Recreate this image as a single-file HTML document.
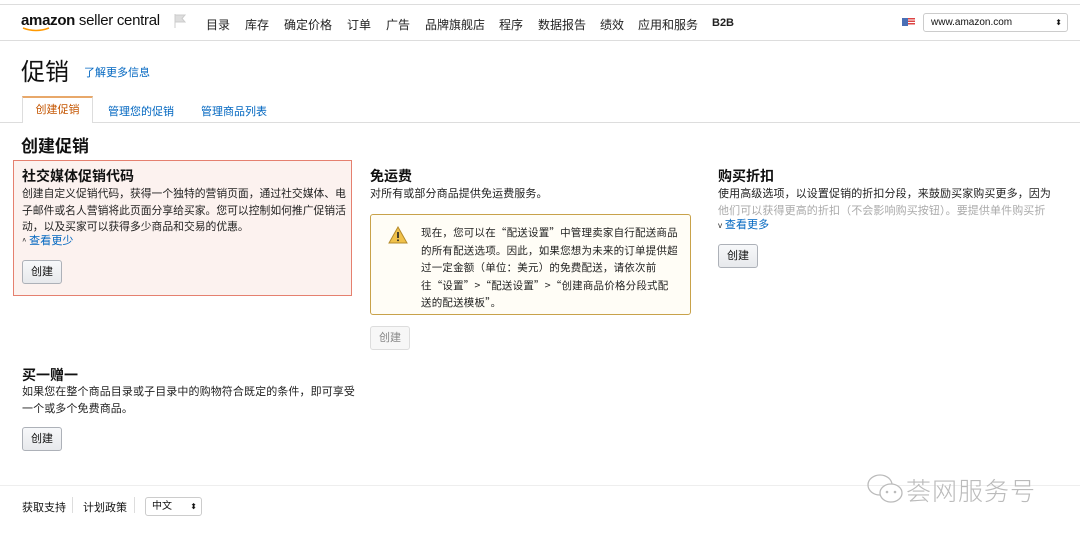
<!DOCTYPE html>
<html><head><meta charset="utf-8"><style>
*{margin:0;padding:0;box-sizing:border-box}
body{width:1080px;height:536px;background:#fff;font-family:"Liberation Sans","Noto Sans CJK SC",sans-serif;color:#111;position:relative;overflow:hidden;font-size:11px}
.abs{position:absolute}
.nav span{position:absolute;top:16px;font-size:12px;color:#222}
.btn{position:absolute;height:24px;padding:0 8px;border:1px solid #adb1b8;border-radius:3px;background:linear-gradient(#f7f8fa,#e7e9ec);font-size:11px;line-height:22px;color:#111}
.h{position:absolute;font-size:14px;font-weight:bold}
.p{position:absolute;font-size:11px;line-height:16.5px;color:#222;font-family:"Noto Sans CJK SC",sans-serif;letter-spacing:0.1px}
a{color:#0066c0;text-decoration:none}
</style></head><body>
<div class="abs" style="left:0;top:4px;width:1080px;height:1px;background:#ddd"></div>
<div class="abs" style="left:0;top:40px;width:1080px;height:1px;background:#ddd"></div>
<div class="abs" style="left:21px;top:12px;font-size:15px;letter-spacing:-0.3px"><b>amazon</b> seller central</div>
<svg class="abs" style="left:22px;top:27px" width="30" height="6"><path d="M1 1 Q14 6 27 1" stroke="#f90" stroke-width="1.5" fill="none"/></svg>
<svg class="abs" style="left:173px;top:13px" width="16" height="16"><path d="M2 1V15M2 2H12L9 5.5L12 9H2" fill="#ddd" stroke="#ccc"/></svg>
<div class="nav">
<span style="left:206px">目录</span><span style="left:245px">库存</span><span style="left:284px">确定价格</span><span style="left:347px">订单</span><span style="left:386px">广告</span><span style="left:425px">品牌旗舰店</span><span style="left:499px">程序</span><span style="left:538px">数据报告</span><span style="left:600px">绩效</span><span style="left:638px">应用和服务</span><span style="left:712px;font-weight:bold;font-size:11px;top:17px">B2B</span>
</div>
<div class="abs" style="left:902px;top:18px;width:13px;height:8px;background:linear-gradient(90deg,#4a6fb5 45%,transparent 45%),repeating-linear-gradient(#d44 0 1.3px,#fff 1.3px 2.6px)"></div>
<div class="abs" style="left:923px;top:13px;width:145px;height:19px;border:1px solid #ccc;border-radius:3px;font-size:10px;line-height:17px;padding-left:7px">www.amazon.com<span style="position:absolute;right:5px;font-size:8px">⬍</span></div>
<div class="abs" style="left:21px;top:52px;font-size:24px">促销</div>
<div class="abs" style="left:84px;top:64px;font-size:11px"><a>了解更多信息</a></div>
<div class="abs" style="left:0;top:122px;width:1080px;height:1px;background:#ddd"></div>
<div class="abs" style="left:22px;top:96px;width:71px;height:27px;border:1px solid #ddd;border-top:2px solid #e8a86a;border-bottom:none;background:#fff;font-size:11px;color:#c45500;text-align:center;line-height:24px">创建促销</div>
<div class="abs" style="left:108px;top:103px;font-size:11px;color:#0066c0">管理您的促销</div>
<div class="abs" style="left:201px;top:103px;font-size:11px;color:#0066c0">管理商品列表</div>
<div class="abs" style="left:21px;top:132px;font-size:17px;font-weight:bold">创建促销</div>
<div class="abs" style="left:13px;top:160px;width:339px;height:136px;background:#fcf2ef;border:1px solid #e5806f"></div>
<div class="h" style="left:22px;top:166px">社交媒体促销代码</div>
<div class="p" style="left:22px;top:185px;width:328px;font-size:10.8px;letter-spacing:0">创建自定义促销代码，获得一个独特的营销页面，通过社交媒体、电子邮件或名人营销将此页面分享给买家。您可以控制如何推广促销活动，以及买家可以获得多少商品和交易的优惠。</div>
<div class="p" style="left:22px;top:232px"><span style="font-size:8px">^</span> <a>查看更少</a></div>
<div class="btn" style="left:22px;top:260px">创建</div>
<div class="h" style="left:370px;top:166px">免运费</div>
<div class="p" style="left:370px;top:185px">对所有或部分商品提供免运费服务。</div>
<div class="abs" style="left:370px;top:214px;width:321px;height:101px;border:1px solid #c8a24a;border-radius:3px;background:#fffdf6"></div>
<svg class="abs" style="left:388px;top:226px" width="20" height="18"><path d="M10 1L19 17H1Z" fill="#f0c14b" stroke="#b48a2a"/><rect x="9.2" y="6" width="1.6" height="6" fill="#222"/><rect x="9.2" y="13.5" width="1.6" height="1.6" fill="#222"/></svg>
<div class="p" style="left:421px;top:224px;width:258px;line-height:17.5px;font-size:10.5px;letter-spacing:0.2px">现在，您可以在“配送设置”中管理卖家自行配送商品的所有配送选项。因此，如果您想为未来的订单提供超过一定金额（单位：美元）的免费配送，请依次前往“设置”&gt;“配送设置”&gt;“创建商品价格分段式配送的配送模板”。</div>
<div class="btn" style="left:370px;top:326px;color:#888;border-color:#ddd;background:#f7f7f7">创建</div>
<div class="h" style="left:718px;top:166px">购买折扣</div>
<div class="p" style="left:718px;top:185px;width:338px;height:31px;overflow:hidden"><span>使用高级选项，以设置促销的折扣分段，来鼓励买家购买更多，因为</span><span style="color:#aaa">他们可以获得更高的折扣（不会影响购买按钮）。要提供单件购买折</span></div>
<div class="p" style="left:718px;top:216px"><span style="font-size:8px">v</span> <a>查看更多</a></div>
<div class="btn" style="left:718px;top:244px">创建</div>
<div class="h" style="left:22px;top:365px">买一赠一</div>
<div class="p" style="left:22px;top:383px;width:344px">如果您在整个商品目录或子目录中的购物符合既定的条件，即可享受一个或多个免费商品。</div>
<div class="btn" style="left:22px;top:427px">创建</div>
<div class="abs" style="left:0;top:485px;width:1080px;height:1px;background:#eee"></div>
<div class="abs" style="left:22px;top:499px;font-size:11px">获取支持</div>
<div class="abs" style="left:72px;top:497px;width:1px;height:16px;background:#ddd"></div>
<div class="abs" style="left:83px;top:499px;font-size:11px">计划政策</div>
<div class="abs" style="left:134px;top:497px;width:1px;height:16px;background:#ddd"></div>
<div class="abs" style="left:145px;top:497px;width:57px;height:19px;border:1px solid #ccc;border-radius:3px;font-size:10px;line-height:17px;padding-left:6px">中文<span style="position:absolute;right:4px;font-size:8px">⬍</span></div>
<svg class="abs" style="left:866px;top:473px" width="40" height="34"><ellipse cx="14" cy="12" rx="12" ry="10" fill="none" stroke="#bbb" stroke-width="1.3"/><ellipse cx="25" cy="20" rx="11" ry="9" fill="#fff" stroke="#bbb" stroke-width="1.3"/><circle cx="21" cy="19" r="1.3" fill="#bbb"/><circle cx="29" cy="19" r="1.3" fill="#bbb"/></svg>
<div class="abs" style="left:906px;top:472px;font-size:25px;color:#bbb;font-weight:300;letter-spacing:1px">荟网服务号</div>
</body></html>
